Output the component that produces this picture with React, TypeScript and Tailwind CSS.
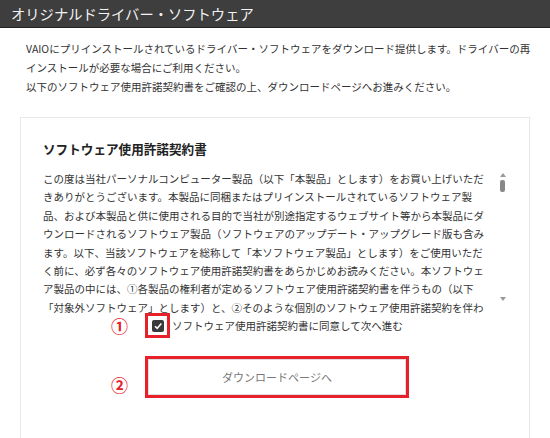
import React, { useState } from "react";

const licenseLines = [
  "この度は当社パーソナルコンピューター製品（以下「本製品」とします）をお買い上げいただ",
  "きありがとうございます。本製品に同梱またはプリインストールされているソフトウェア製",
  "品、および本製品と供に使用される目的で当社が別途指定するウェブサイト等から本製品にダ",
  "ウンロードされるソフトウェア製品（ソフトウェアのアップデート・アップグレード版も含み",
  "ます。以下、当該ソフトウェアを総称して「本ソフトウェア製品」とします）をご使用いただ",
  "く前に、必ず各々のソフトウェア使用許諾契約書をあらかじめお読みください。本ソフトウェ",
  "ア製品の中には、①各製品の権利者が定めるソフトウェア使用許諾契約書を伴うもの（以下",
  "「対象外ソフトウェア」とします）と、②そのような個別のソフトウェア使用許諾契約を伴わ",
];

const jp = { fontFamily: '"Noto Sans CJK JP", "Noto Sans", sans-serif' };

export default function App() {
  const [agreed, setAgreed] = useState(true);

  return (
    <div className="w-[550px] h-[438px] overflow-hidden bg-white text-[#333]" style={jp}>
      <header className="h-[28px] bg-[#3e3e3e] border-b border-[#222] flex items-center pl-[11px]">
        <h1 className="text-[14.3px] text-[#f2f2f2]">オリジナルドライバー・ソフトウェア</h1>
      </header>

      <p className="px-[26px] pt-[11px] text-[10.5px] leading-[19px] whitespace-nowrap">
        VAIOにプリインストールされているドライバー・ソフトウェアをダウンロード提供します。ドライバーの再
        <br />
        インストールが必要な場合にご利用ください。
        <br />
        以下のソフトウェア使用許諾契約書をご確認の上、ダウンロードページへお進みください。
      </p>

      <section className="mx-[20px] mt-[21px] border border-[#e8e8e8] px-[22px] pt-[22px] h-[340px]">
        <h2 className="text-[12.6px] font-bold text-[#222] leading-[18px]">ソフトウェア使用許諾契約書</h2>

        <div className="mt-[12px] flex h-[145px] overflow-hidden">
          <div className="w-[444px] text-[10.5px] leading-[18.4px]">
            {licenseLines.map((line) => (
              <div key={line} className="whitespace-nowrap">
                {line}
              </div>
            ))}
          </div>
          <div className="w-[12px] ml-[14px] flex flex-col items-center pt-[3px] pb-[14px]">
            <div className="w-0 h-0 border-l-[3px] border-r-[3px] border-b-[4px] border-l-transparent border-r-transparent border-b-[#999]" />
            <div className="mt-[3px] w-[5px] h-[12px] rounded-[2px] bg-[#888]" />
            <div className="flex-1" />
            <div className="w-0 h-0 border-l-[3px] border-r-[3px] border-t-[4px] border-l-transparent border-r-transparent border-t-[#999]" />
          </div>
        </div>

        <div className="-mt-[2px] flex items-center ml-[68px]">
          <span className="w-[34px] text-[#e8202a] text-[17px] font-bold leading-none">①</span>
          <label className="flex items-center cursor-pointer">
            <span className="w-[25px] h-[25px] border-[3px] border-[#e8202a] flex items-center justify-center">
              <input
                type="checkbox"
                checked={agreed}
                onChange={(e) => setAgreed(e.target.checked)}
                className="hidden"
              />
              <span className="w-[12px] h-[12px] rounded-[2px] bg-[#3a3a3a] flex items-center justify-center">
                {agreed && (
                  <svg width="10" height="10" viewBox="0 0 10 10">
                    <path d="M2 5.2 L4.2 7.4 L8.3 2.6" stroke="#fff" strokeWidth="1.6" fill="none" />
                  </svg>
                )}
              </span>
            </span>
            <span className="ml-[2px] text-[10.5px] text-[#333]">ソフトウェア使用許諾契約書に同意して次へ進む</span>
          </label>
        </div>

        <div className="mt-[18px] flex items-center ml-[68px]">
          <span className="w-[34px] text-[#e8202a] text-[17px] font-bold leading-none pt-[14px]">②</span>
          <div className="w-[264px] h-[42px] border-[3px] border-[#e8202a]">
            <button className="w-full h-full bg-white border border-[#ddd] text-[11px] text-[#777]">
              ダウンロードページへ
            </button>
          </div>
        </div>
      </section>
    </div>
  );
}
